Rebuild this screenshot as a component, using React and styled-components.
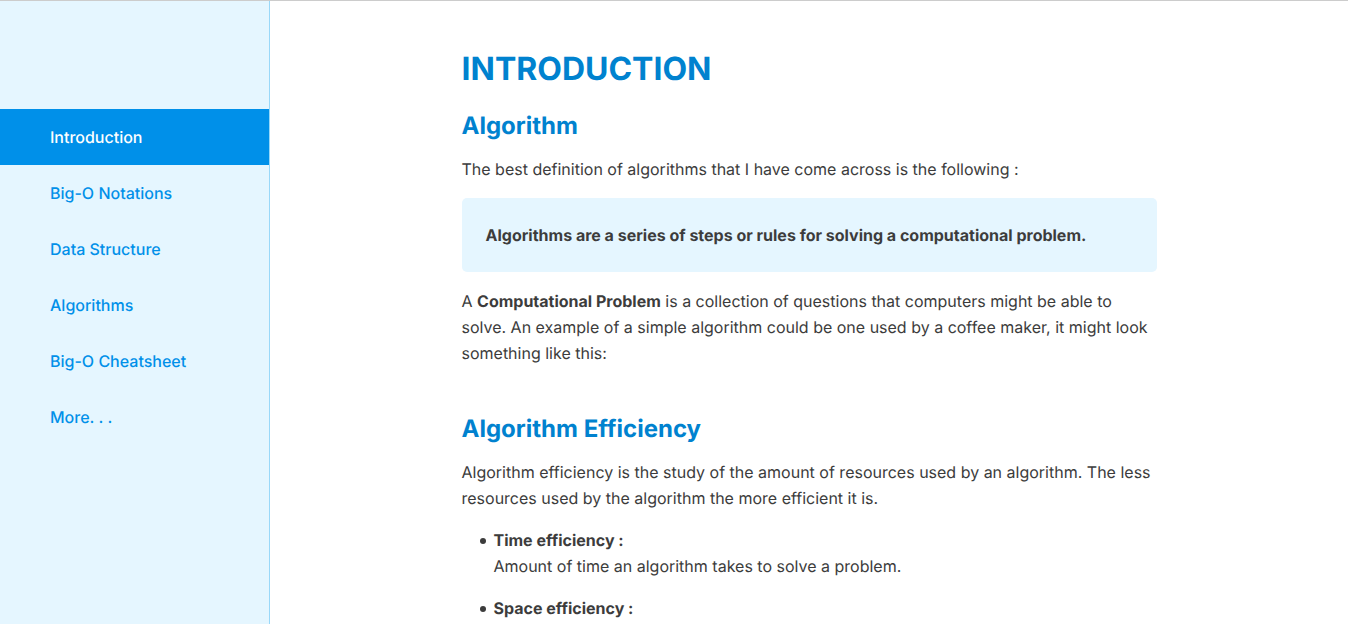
import React from "react";
import styled, { createGlobalStyle } from "styled-components";

const GlobalStyle = createGlobalStyle`
  *, *::before, *::after { box-sizing: border-box; }
  body {
    margin: 0;
    background: #fff;
    color: #3c3c3c;
    font-family: Inter, "Liberation Sans", sans-serif;
    font-size: 16px;
    line-height: 26px;
    text-rendering: geometricPrecision;
  }
`;

const Page = styled.div`
  display: grid;
  grid-template-columns: 270px minmax(0, 1fr);
  height: 100vh;
  overflow: hidden;
  border-top: 1px solid #ccc;
`;

const Sidebar = styled.nav`
  padding-top: 108px;
  background: #e5f6ff;
  border-right: 1px solid #99d8f9;
`;

const NavList = styled.ul`
  margin: 0;
  padding: 0;
  list-style: none;
`;

const NavLink = styled.a`
  display: block;
  padding: 16px 50px;
  line-height: 24px;
  font-weight: 500;
  text-decoration: none;
  color: ${(p) => (p.$active ? "#fff" : "#0090e9")};
  background: ${(p) => (p.$active ? "#0090e9" : "transparent")};
`;

const Main = styled.main`
  overflow: hidden;
  padding: 48px 24px 0;
`;

const Article = styled.article`
  max-width: 695px;
  margin: 0 auto;
`;

const Title = styled.h1`
  margin: 0 0 20px;
  font-size: 32px;
  line-height: 40px;
  font-weight: 700;
  text-transform: uppercase;
  color: #0082cf;
`;

const Section = styled.section`
  margin-bottom: 46px;
`;

const Heading = styled.h2`
  margin: 0 0 13px;
  font-size: 24px;
  line-height: 34px;
  font-weight: 700;
  color: #0082cf;
`;

const Text = styled.p`
  margin: 0 0 16px;
`;

const Callout = styled.blockquote`
  margin: 0 0 16px;
  padding: 24px;
  border-radius: 5px;
  background: #e5f6ff;
  font-weight: 700;
`;

const List = styled.ul`
  margin: 0;
  padding-left: 18px;
  list-style: none;
`;

const Item = styled.li`
  display: flex;
  gap: 8px;
  margin-bottom: 16px;

  &::before {
    content: "";
    flex: none;
    width: 6px;
    height: 6px;
    margin-top: 11px;
    border-radius: 50%;
    background: currentColor;
  }
`;

const Term = styled.strong`
  display: block;
`;

const links = [
  "Introduction",
  "Big-O Notations",
  "Data Structure",
  "Algorithms",
  "Big-O Cheatsheet",
  "More. . .",
];

export default function App() {
  return (
    <>
      <GlobalStyle />
      <Page>
        <Sidebar aria-label="Topics">
          <NavList>
            {links.map((label, i) => (
              <li key={label}>
                <NavLink href="#" $active={i === 0} aria-current={i === 0 ? "page" : undefined}>
                  {label}
                </NavLink>
              </li>
            ))}
          </NavList>
        </Sidebar>
        <Main>
          <Article>
            <Title>Introduction</Title>
            <Section>
              <Heading>Algorithm</Heading>
              <Text>The best definition of algorithms that I have come across is the following :</Text>
              <Callout>Algorithms are a series of steps or rules for solving a computational problem.</Callout>
              <Text>
                A <strong>Computational Problem</strong> is a collection of questions that computers might be able to
                solve. An example of a simple algorithm could be one used by a coffee maker, it might look something
                like this:
              </Text>
            </Section>
            <Section>
              <Heading>Algorithm Efficiency</Heading>
              <Text>
                Algorithm efficiency is the study of the amount of resources used by an algorithm. The less resources
                used by the algorithm the more efficient it is.
              </Text>
              <List>
                <Item>
                  <div>
                    <Term>Time efficiency :</Term>
                    Amount of time an algorithm takes to solve a problem.
                  </div>
                </Item>
                <Item>
                  <div>
                    <Term>Space efficiency :</Term>
                  </div>
                </Item>
              </List>
            </Section>
          </Article>
        </Main>
      </Page>
    </>
  );
}
